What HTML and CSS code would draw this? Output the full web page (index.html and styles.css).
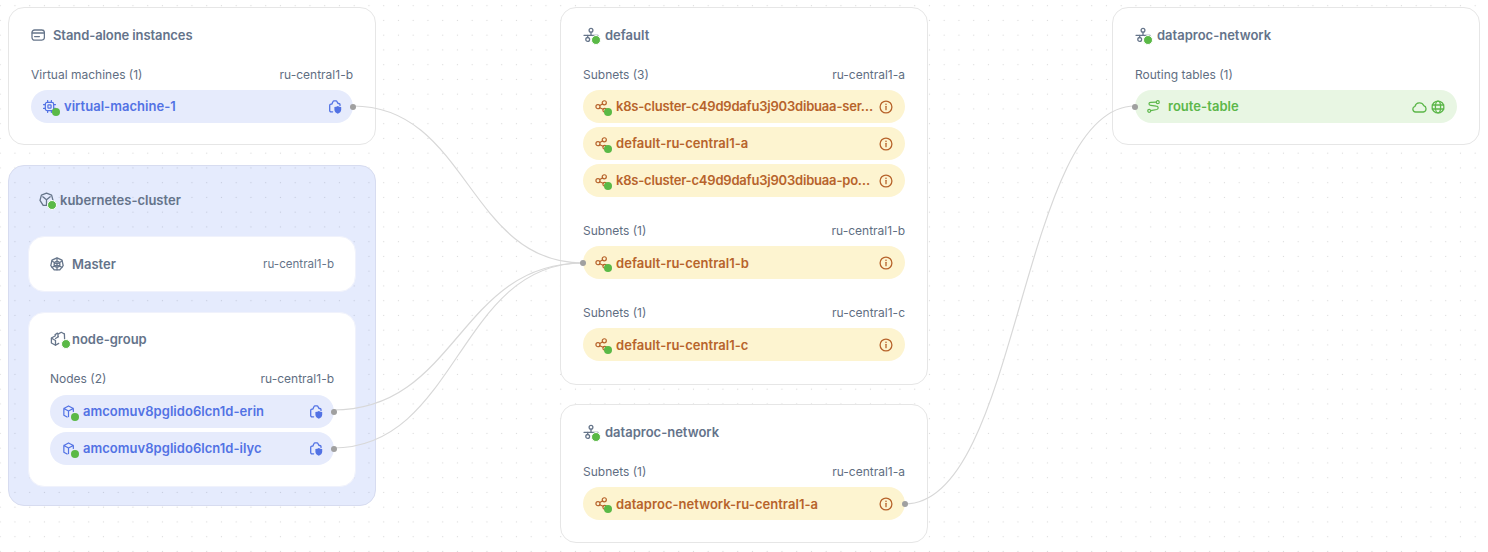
FILE: index.html
```html
<!DOCTYPE html>
<html lang="en">
<head>
<meta charset="utf-8">
<title>Network map</title>
<link rel="stylesheet" href="styles.css">
</head>
<body>
<svg class="defs" width="0" height="0" aria-hidden="true">
  <symbol id="i-list" viewBox="0 0 14 14"><rect x="1" y="2" width="12.4" height="10.2" rx="2.6"/><path d="M1.200 5H13.200M3.600 8.600H8.400"/></symbol>
  <symbol id="i-cpu" viewBox="0 0 14 14"><rect x="2.500" y="2.500" width="9" height="9" rx="2"/><rect x="5.300" y="5.300" width="3.400" height="3.400" rx=".7"/><path d="M5 .6v1.900M9 .6v1.900M5 11.500v1.900M9 11.500v1.900M.6 5h1.900M.6 9h1.900M11.500 5h1.900M11.500 9h1.900"/></symbol>
  <symbol id="i-guard" viewBox="0 0 14 14"><path d="M4.600 11.800H3A1.300 1.300 0 0 1 1.700 10.500V5.400A1.200 1.200 0 0 1 2.900 4.200H3.800L5 1.600C5.200 1.100 5.500 .9 6 .9H8C8.500 .9 8.800 1.100 9 1.600L10 3.500H10.900A1.100 1.100 0 0 1 12 4.600V5.400"/><path class="fill" d="M9.800 6.100c.9.700 2.100 1 3.400 1v2.700c0 1.900-1.500 3.200-3.400 3.900-1.900-.7-3.400-2-3.400-3.900V7.100c1.300 0 2.500-.3 3.400-1z"/></symbol>
  <symbol id="i-net" viewBox="0 0 16 16"><circle cx="8" cy="3.200" r="1.900"/><path d="M8 5.100v3.200M1 8.300h14"/><circle cx="4.700" cy="12.400" r="1.900"/><path d="M4.700 8.300v2.200"/></symbol>
  <symbol id="i-subnet" viewBox="0 0 14 14"><circle cx="3.200" cy="7.200" r="2.200"/><circle cx="10" cy="3" r="2.200"/><circle cx="10.500" cy="11" r="2"/><path d="M5.100 6 8.100 4.200M5.100 8.400 8.700 10"/></symbol>
  <symbol id="i-info" viewBox="0 0 14 14"><circle cx="7" cy="7" r="5.900"/><path d="M7 6.300v3.400"/><circle class="fill" cx="7" cy="4.200" r=".8"/></symbol>
  <symbol id="i-route" viewBox="0 0 14 14"><circle cx="2.400" cy="11.700" r="1.600"/><circle cx="11.600" cy="2.300" r="1.600"/><path d="M4 11.500 10.600 10.200C12.800 9.600 12.400 6.800 10 6.600L4 5.800C1.400 5.400 1.600 2.700 4 2.500L9.800 2.300"/></symbol>
  <symbol id="i-cloud" viewBox="0 0 15 14"><path d="M3.600 12A2.900 2.900 0 0 1 3 6.300 4.600 4.600 0 0 1 11.700 5.600 3.300 3.300 0 0 1 11.300 12z"/></symbol>
  <symbol id="i-globe" viewBox="0 0 14 14"><circle cx="7" cy="7" r="5.900"/><ellipse cx="7" cy="7" rx="2.600" ry="5.900"/><path d="M1.200 5h11.600M1.200 9h11.600"/></symbol>
  <symbol id="i-hex" viewBox="0 0 14 14"><path d="M2 11V3.700L7 1l5.200 2.700V7M2 3.700l5 2.800 5.200-2.800M7 6.500V12.500M2 11l3.500 2"/></symbol>
  <symbol id="i-k8s" viewBox="0 0 14 14"><path d="M7 .8 12 3.200 13.200 8.600 9.800 12.900H4.200L.8 8.600 2 3.200z"/><circle cx="7" cy="7.200" r="2.900"/><path d="M7 1.500V12.800M2 4 12 10.500M12 4 2 10.500"/></symbol>
  <symbol id="i-cluster" viewBox="0 0 16 16"><path d="M7.500 1.200 12.600 3.200 14 8.300 10.800 13.400H4.200L1 8.300 2.400 3.200z"/><path d="M3.800 4.800 7.500 7.800 11.200 4.800M7.500 7.800V13"/></symbol>
  <symbol id="i-group" viewBox="0 0 18 16"><path d="M5.500 4.800 1.400 7v5l4.100 2.300 3.200-1.900"/><path d="M5 3.800 7.400 2.100M8 5.700V3.100l3.300-1.800 3.100 1.700"/><path d="M8.400 5.800 5.500 7.500M1.600 7.200l3.900 2.300v4.600M14.400 3l.2 5"/></symbol>
</svg>

<main class="canvas">
  <svg class="edges" width="1488" height="552" viewBox="0 0 1488 552" aria-hidden="true">
    <path d="M353 106C468 106 468 263 583 263"/>
    <path d="M333 410C458 410 458 263 583 263"/>
    <path d="M333 448C458 448 458 263 583 263"/>
    <path d="M905 504C1020 504 1020 106 1135 106"/>
  </svg>

  <section class="card node standalone">
    <h2 class="title"><span class="ico ico-title"><svg class="glyph"><use href="#i-list"/></svg></span><span class="title-gap tight">Stand-alone instances</span></h2>
    <div class="meta"><span>Virtual machines (1)</span><span>ru-central1-b</span></div>
    <div class="rows">
      <div class="row blue"><span class="ico"><svg class="glyph"><use href="#i-cpu"/></svg><i class="ok"></i></span><span class="name">virtual-machine-1</span><svg class="glyph end guard"><use href="#i-guard"/></svg><b class="port port-r"></b></div>
    </div>
  </section>

  <section class="card node cluster">
    <h2 class="title cluster-title"><span class="ico ico-net"><svg class="glyph"><use href="#i-cluster"/></svg><i class="ok"></i></span>kubernetes-cluster</h2>
    <div class="inner master">
      <h2 class="title flat"><span class="ico ico-title"><svg class="glyph"><use href="#i-k8s"/></svg></span><span class="title-gap">Master</span></h2>
      <span class="zone">ru-central1-b</span>
    </div>
    <div class="inner group">
      <h2 class="title"><span class="ico ico-group"><svg class="glyph"><use href="#i-group"/></svg><i class="ok"></i></span>node-group</h2>
      <div class="meta"><span>Nodes (2)</span><span>ru-central1-b</span></div>
      <div class="rows">
        <div class="row blue"><span class="ico"><svg class="glyph"><use href="#i-hex"/></svg><i class="ok"></i></span><span class="name">amcomuv8pglido6lcn1d-erin</span><svg class="glyph end guard"><use href="#i-guard"/></svg><b class="port port-r"></b></div>
        <div class="row blue"><span class="ico"><svg class="glyph"><use href="#i-hex"/></svg><i class="ok"></i></span><span class="name">amcomuv8pglido6lcn1d-ilyc</span><svg class="glyph end guard"><use href="#i-guard"/></svg><b class="port port-r"></b></div>
      </div>
    </div>
  </section>

  <section class="card node net-default">
    <h2 class="title"><span class="ico ico-net"><svg class="glyph"><use href="#i-net"/></svg><i class="ok"></i></span>default</h2>
    <div class="meta"><span>Subnets (3)</span><span>ru-central1-a</span></div>
    <div class="rows">
      <div class="row amber"><span class="ico"><svg class="glyph"><use href="#i-subnet"/></svg><i class="ok"></i></span><span class="name trunc">k8s-cluster-c49d9dafu3j903dibuaa-ser…</span><svg class="glyph end"><use href="#i-info"/></svg></div>
      <div class="row amber"><span class="ico"><svg class="glyph"><use href="#i-subnet"/></svg><i class="ok"></i></span><span class="name">default-ru-central1-a</span><svg class="glyph end"><use href="#i-info"/></svg></div>
      <div class="row amber"><span class="ico"><svg class="glyph"><use href="#i-subnet"/></svg><i class="ok"></i></span><span class="name trunc">k8s-cluster-c49d9dafu3j903dibuaa-po…</span><svg class="glyph end"><use href="#i-info"/></svg></div>
    </div>
    <div class="meta later"><span>Subnets (1)</span><span>ru-central1-b</span></div>
    <div class="rows low">
      <div class="row amber"><span class="ico"><svg class="glyph"><use href="#i-subnet"/></svg><i class="ok"></i></span><span class="name">default-ru-central1-b</span><svg class="glyph end"><use href="#i-info"/></svg><b class="port port-l"></b></div>
    </div>
    <div class="meta later"><span>Subnets (1)</span><span>ru-central1-c</span></div>
    <div class="rows low">
      <div class="row amber"><span class="ico"><svg class="glyph"><use href="#i-subnet"/></svg><i class="ok"></i></span><span class="name">default-ru-central1-c</span><svg class="glyph end"><use href="#i-info"/></svg></div>
    </div>
  </section>

  <section class="card node net-dataproc">
    <h2 class="title"><span class="ico ico-net"><svg class="glyph"><use href="#i-net"/></svg><i class="ok"></i></span>dataproc-network</h2>
    <div class="meta"><span>Subnets (1)</span><span>ru-central1-a</span></div>
    <div class="rows low">
      <div class="row amber"><span class="ico"><svg class="glyph"><use href="#i-subnet"/></svg><i class="ok"></i></span><span class="name">dataproc-network-ru-central1-a</span><svg class="glyph end"><use href="#i-info"/></svg><b class="port port-r"></b></div>
    </div>
  </section>

  <section class="card node net-route">
    <h2 class="title"><span class="ico ico-net"><svg class="glyph"><use href="#i-net"/></svg><i class="ok"></i></span>dataproc-network</h2>
    <div class="meta"><span>Routing tables (1)</span></div>
    <div class="rows">
      <div class="row green"><span class="ico"><svg class="glyph"><use href="#i-route"/></svg></span><span class="name">route-table</span><svg class="glyph end cloud"><use href="#i-cloud"/></svg><svg class="glyph end globe"><use href="#i-globe"/></svg><b class="port port-l"></b></div>
    </div>
  </section>
</main>
</body>
</html>
```
FILE: styles.css
```css
* { box-sizing: border-box; }
html, body { margin: 0; height: 100%; background: #fff; }
body { overflow: hidden; font-family: Inter, "Noto Sans", sans-serif; }
.defs { position: absolute; }

.canvas {
  position: relative;
  width: 1488px;
  height: 552px;
  background-image: radial-gradient(circle, #dadada 0.7px, transparent 1px);
  background-size: 14.75px 14.75px;
  background-position: -7.2px -1.7px;
}
.edges { position: absolute; inset: 0; z-index: 2; pointer-events: none; }
.edges path { fill: none; stroke: #d8d8d8; stroke-width: 1.2; }

.node { position: absolute; width: 368px; }
.standalone { left: 8px; top: 7px; height: 138px; }
.cluster { left: 8px; top: 165px; height: 341px; }
.net-default { left: 560px; top: 7px; height: 378px; }
.net-dataproc { left: 560px; top: 404px; height: 139px; }
.net-route { left: 1112px; top: 7px; height: 138px; }

.card {
  padding: 17px 22px 0;
  background: #fff;
  border: 1px solid #e6e6e6;
  border-radius: 16px;
}
.cluster {
  padding: 24px 19px 0;
  background: rgba(82, 120, 240, 0.15);
  border-color: #d7dcf0;
}
.inner {
  background: #fff;
  border: 1px solid #f0f2fc;
  border-radius: 16px;
}
.master {
  display: flex;
  align-items: center;
  justify-content: space-between;
  height: 56px;
  margin-top: 26px;
  padding: 0 21px;
}
.group {
  height: 175px;
  margin-top: 20px;
  padding: 16px 21px 0;
}

.title {
  display: flex;
  align-items: center;
  height: 20px;
  margin: 0;
  font-size: 13px;
  font-weight: 600;
  line-height: 20px;
  color: #64738a;
}
.cluster-title { padding-left: 11px; }
.flat { height: auto; }
.title-gap { margin-left: 8px; }
.tight { letter-spacing: -0.09px; }

.meta {
  display: flex;
  justify-content: space-between;
  height: 16px;
  margin: 22px 0 7px;
  font-size: 12px;
  font-weight: 400;
  line-height: 16px;
  color: #5f6e82;
}
.group .meta { margin-bottom: 8px; }
.later { margin-top: 26px; }
.zone { font-size: 11.6px; font-weight: 400; color: #66758a; }

.rows { display: flex; flex-direction: column; gap: 4px; }
.row {
  position: relative;
  display: flex;
  align-items: center;
  height: 33px;
  padding: 0 12px;
  border-radius: 17px;
  font-size: 13px;
  font-weight: 600;
  letter-spacing: 0.04px;
}
.blue { background: #e6ebfc; color: #5272e4; }
.amber { background: #fdf4d0; color: #b7632b; }
.green { background: #e8f6e3; color: #5cb74a; }

.name {
  flex: 1;
  min-width: 0;
  margin: 0 0 2px 8px;
  white-space: nowrap;
}
.trunc { letter-spacing: -0.2px; }
.low .name { margin-bottom: 0; }

.ico { position: relative; display: block; flex: none; width: 13px; height: 13px; }
.ico-title { width: 14px; height: 14px; }
.ico-net { width: 16px; height: 16px; margin-right: 6px; }
.ico-group { width: 18px; height: 16px; margin-right: 4px; }
.cluster-title .ico-net { margin-right: 5px; }
.title .ico { color: #66758a; }

.glyph {
  display: block;
  width: 100%;
  height: 100%;
  fill: none;
  stroke: currentColor;
  stroke-width: 1.3;
  stroke-linecap: round;
  stroke-linejoin: round;
}
symbol .fill { fill: currentColor; stroke: none; }
.end { flex: none; width: 14px; height: 14px; }
.guard { margin-right: -1px; }
.cloud { width: 15px; height: 14px; margin-right: 4px; }
.globe { width: 14px; height: 14px; }

.ok {
  position: absolute;
  right: -5px;
  bottom: -4px;
  width: 10px;
  height: 10px;
  background: #5ab946;
  border: 1px solid #fff;
  border-radius: 50%;
}
.ico-net .ok { right: -2px; bottom: -2px; }
.ico-group .ok { right: -3px; bottom: -2px; }
.blue .ok, .amber .ok { border-color: transparent; background-clip: padding-box; }

.port {
  position: absolute;
  z-index: 3;
  top: 13.5px;
  width: 6px;
  height: 6px;
  background: #a0a0a0;
  border-radius: 50%;
}
.port-r { right: -3px; }
.port-l { left: -3px; }
```
